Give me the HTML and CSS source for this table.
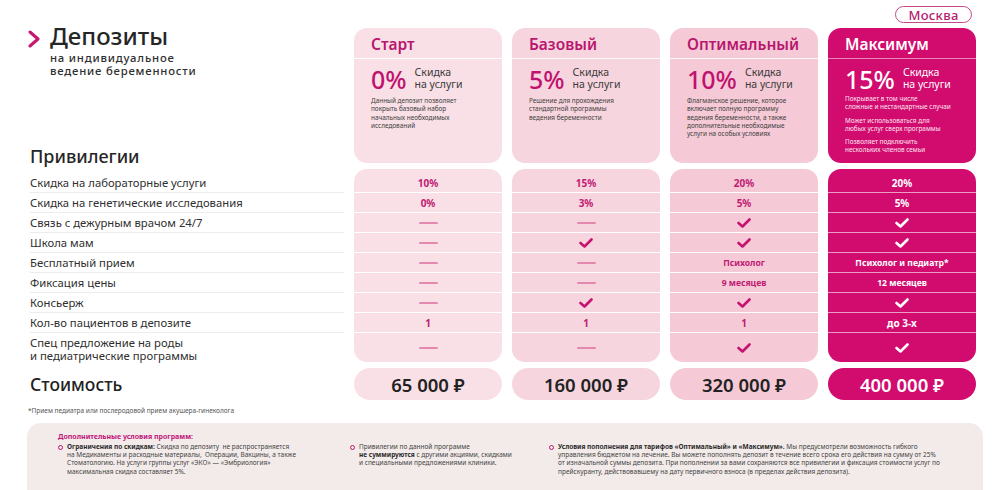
FILE: index.html
```html
<!DOCTYPE html>
<html lang="ru">
<head>
<meta charset="utf-8">
<title>Депозиты</title>
<link rel="stylesheet" href="styles.css">
</head>
<body>
<div class="page">
  <div class="city-row"><span class="city">Москва</span></div>

  <div class="grid top">
    <div class="intro">
      <div class="head">
        <svg class="chev" width="12" height="18" viewBox="0 0 12 18"><path d="M2 2 L10 9 L2 16" fill="none" stroke="#c8156f" stroke-width="3" stroke-linecap="round" stroke-linejoin="round"/></svg>
        <div>
          <h1 class="title">Депозиты</h1>
          <p class="subtitle">на индивидуальное<br>ведение беременности</p>
        </div>
      </div>
      <h2 class="section">Привилегии</h2>
    </div>

    <div class="plan c1">
      <div class="plan-name">Старт</div>
      <div class="plan-body">
        <div class="disc"><span class="pct">0%</span><span class="disc-l">Скидка<br>на услуги</span></div>
        <p class="desc">Данный депозит позволяет<br>покрыть базовый набор<br>начальных необходимых<br>исследований</p>
      </div>
    </div>
    <div class="plan c2">
      <div class="plan-name">Базовый</div>
      <div class="plan-body">
        <div class="disc"><span class="pct">5%</span><span class="disc-l">Скидка<br>на услуги</span></div>
        <p class="desc">Решение для прохождения<br>стандартной программы<br>ведения беременности</p>
      </div>
    </div>
    <div class="plan c3">
      <div class="plan-name">Оптимальный</div>
      <div class="plan-body">
        <div class="disc"><span class="pct">10%</span><span class="disc-l">Скидка<br>на услуги</span></div>
        <p class="desc">Флагманское решение, которое<br>включает полную программу<br>ведения беременности, а также<br>дополнительные необходимые<br>услуги на особых условиях</p>
      </div>
    </div>
    <div class="plan c4">
      <div class="plan-name">Максимум</div>
      <div class="plan-body">
        <div class="disc"><span class="pct">15%</span><span class="disc-l">Скидка<br>на услуги</span></div>
        <p class="desc">Покрывает в том числе<br>сложные и нестандартные случаи</p>
        <p class="desc">Может использоваться для<br>любых услуг сверх программы</p>
        <p class="desc">Позволяет подключить<br>нескольких членов семьи</p>
      </div>
    </div>
  </div>

  <div class="grid table">
    <div class="labels">
      <div class="lrow">Скидка на лабораторные услуги</div>
      <div class="lrow">Скидка на генетические исследования</div>
      <div class="lrow">Связь с дежурным врачом 24/7</div>
      <div class="lrow">Школа мам</div>
      <div class="lrow">Бесплатный прием</div>
      <div class="lrow">Фиксация цены</div>
      <div class="lrow">Консьерж</div>
      <div class="lrow">Кол-во пациентов в депозите</div>
      <div class="lrow tall">Спец предложение на роды<br>и педиатрические программы</div>
    </div>

    <div class="col c1">
      <div class="cell">10%</div>
      <div class="cell">0%</div>
      <div class="cell"><span class="dash"></span></div>
      <div class="cell"><span class="dash"></span></div>
      <div class="cell"><span class="dash"></span></div>
      <div class="cell"><span class="dash"></span></div>
      <div class="cell"><span class="dash"></span></div>
      <div class="cell">1</div>
      <div class="cell tall"><span class="dash"></span></div>
    </div>
    <div class="col c2">
      <div class="cell">15%</div>
      <div class="cell">3%</div>
      <div class="cell"><span class="dash"></span></div>
      <div class="cell"><svg class="chk" viewBox="0 0 14 10"><path d="M1.5 5 L5.5 8.5 L12.5 1.5"/></svg></div>
      <div class="cell"><span class="dash"></span></div>
      <div class="cell"><span class="dash"></span></div>
      <div class="cell"><svg class="chk" viewBox="0 0 14 10"><path d="M1.5 5 L5.5 8.5 L12.5 1.5"/></svg></div>
      <div class="cell">1</div>
      <div class="cell tall"><span class="dash"></span></div>
    </div>
    <div class="col c3">
      <div class="cell">20%</div>
      <div class="cell">5%</div>
      <div class="cell"><svg class="chk" viewBox="0 0 14 10"><path d="M1.5 5 L5.5 8.5 L12.5 1.5"/></svg></div>
      <div class="cell"><svg class="chk" viewBox="0 0 14 10"><path d="M1.5 5 L5.5 8.5 L12.5 1.5"/></svg></div>
      <div class="cell small">Психолог</div>
      <div class="cell small">9 месяцев</div>
      <div class="cell"><svg class="chk" viewBox="0 0 14 10"><path d="M1.5 5 L5.5 8.5 L12.5 1.5"/></svg></div>
      <div class="cell">1</div>
      <div class="cell tall"><svg class="chk" viewBox="0 0 14 10"><path d="M1.5 5 L5.5 8.5 L12.5 1.5"/></svg></div>
    </div>
    <div class="col c4">
      <div class="cell">20%</div>
      <div class="cell">5%</div>
      <div class="cell"><svg class="chk" viewBox="0 0 14 10"><path d="M1.5 5 L5.5 8.5 L12.5 1.5"/></svg></div>
      <div class="cell"><svg class="chk" viewBox="0 0 14 10"><path d="M1.5 5 L5.5 8.5 L12.5 1.5"/></svg></div>
      <div class="cell small">Психолог и педиатр*</div>
      <div class="cell small">12 месяцев</div>
      <div class="cell"><svg class="chk" viewBox="0 0 14 10"><path d="M1.5 5 L5.5 8.5 L12.5 1.5"/></svg></div>
      <div class="cell">до 3-х</div>
      <div class="cell tall"><svg class="chk" viewBox="0 0 14 10"><path d="M1.5 5 L5.5 8.5 L12.5 1.5"/></svg></div>
    </div>
  </div>

  <div class="grid prices">
    <div class="price-label">Стоимость</div>
    <div class="price c1">65 000 ₽</div>
    <div class="price c2">160 000 ₽</div>
    <div class="price c3">320 000 ₽</div>
    <div class="price c4">400 000 ₽</div>
  </div>

  <p class="footnote">*Прием педиатра или послеродовой прием акушера-гинеколога</p>

  <div class="conditions">
    <div class="cond-title">Дополнительные условия программ:</div>
    <div class="cond-grid">
      <div class="item"><span class="bul"></span><p><b>Ограничения по скидкам:</b> Скидка по депозиту&nbsp; не распространяется<br>на Медикаменты и расходные материалы,&nbsp; Операции, Вакцины, а также<br>Стоматологию. На услуги группы услуг «ЭКО» — «Эмбриология»<br>максимальная скидка составляет 5%.</p></div>
      <div class="item"><span class="bul"></span><p>Привилегии по данной программе<br><b>не суммируются</b> с другими акциями, скидками<br>и специальными предложениями клиники.</p></div>
      <div class="item"><span class="bul"></span><p><b>Условия пополнения для тарифов «Оптимальный» и «Максимум».</b> Мы предусмотрели возможность гибкого<br>управления бюджетом на лечение. Вы можете пополнять депозит в течение всего срока его действия на сумму от 25%<br>от изначальной суммы депозита. При пополнении за вами сохраняются все привилегии и фиксация стоимости услуг по<br>прейскуранту, действовавшему на дату первичного взноса (в пределах действия депозита).</p></div>
    </div>
  </div>
</div>
</body>
</html>
```

FILE: styles.css
```css
* { box-sizing: border-box; }
body {
  margin: 0;
  background: #fff;
  font-family: "Noto Sans", "DejaVu Sans", sans-serif;
  color: #2b2b2b;
}
p, h1, h2 { margin: 0; }

.page {
  width: 1000px;
  height: 490px;
  overflow: hidden;
  padding: 6px 0 0 30px;
}

.city-row {
  width: 942px;
  display: flex;
  justify-content: flex-end;
}
.city {
  width: 77px;
  height: 17px;
  border: 1.3px solid #c5488a;
  border-radius: 9px;
  display: flex;
  align-items: center;
  justify-content: center;
  font-size: 13px;
  font-weight: 500;
  letter-spacing: 0.3px;
  color: #b51c70;
}

.grid {
  display: grid;
  grid-template-columns: 314px repeat(4, 148px);
  column-gap: 10px;
}

/* top section */
.top { margin-top: 5px; height: 135px; }
.intro {
  display: flex;
  flex-direction: column;
  justify-content: space-between;
}
.head {
  display: flex;
  align-items: flex-start;
  margin-top: -6px;
  margin-left: -2px;
}
.chev { margin-top: 8px; margin-right: 10px; flex: none; }
.title {
  font-size: 24px;
  line-height: 28px;
  font-weight: 500;
  color: #262626;
}
.subtitle {
  margin-top: 1px;
  font-size: 11.3px;
  line-height: 13px;
  letter-spacing: 0.8px;
  font-weight: 500;
  color: #2f2f2f;
}
.section {
  font-size: 18px;
  line-height: 20px;
  font-weight: 500;
  color: #262626;
  margin-bottom: -3px;
}

.plan { border-radius: 13px; }
.c1 { background: #f9e0e6; }
.c2 { background: #f7d5de; }
.c3 { background: #f5cad6; }
.c4 { background: #d20b6f; color: #fff; }

.plan-name {
  height: 31px;
  border-bottom: 1px solid rgba(255,255,255,0.85);
  padding: 6px 0 0 17px;
  font-size: 15.5px;
  line-height: 20px;
  font-weight: 600;
  color: #b8166f;
}
.c4 .plan-name { color: #fff; border-bottom-color: rgba(255,255,255,0.5); }
.plan-body { padding: 8px 6px 0 17px; }
.disc { display: flex; align-items: center; height: 24px; }
.pct {
  font-size: 25px;
  line-height: 24px;
  font-weight: 500;
  color: #c0126f;
  margin-right: 8px;
}
.c4 .pct { color: #fff; }
.disc-l {
  font-size: 10.5px;
  line-height: 12px;
  color: #3a3a3a;
  margin-top: -2px;
}
.c4 .disc-l { color: #fff; }
.desc {
  margin-top: 6px;
  font-size: 6.4px;
  line-height: 8.3px;
  color: #3d3d3d;
}
.c4 .desc { color: #fde6f0; margin-top: 5px; }
.c4 .disc + .desc { margin-top: 4px; }

/* table */
.table { margin-top: 6px; }
.labels { padding-top: 4px; }
.lrow {
  height: 20px;
  border-bottom: 1px solid #ececec;
  display: flex;
  align-items: center;
  font-size: 11.3px;
  color: #2f2f2f;
}
.lrow.tall {
  height: 29px;
  border-bottom: none;
  line-height: 13px;
  padding-top: 2px;
}
.col { border-radius: 13px; padding-top: 4px; }
.cell {
  height: 20px;
  border-bottom: 1px solid #fff;
  display: flex;
  align-items: center;
  justify-content: center;
  font-size: 10px;
  font-weight: 700;
  color: #bf1a74;
}
.cell.small { font-size: 8.6px; }
.cell.tall { height: 29px; border-bottom: none; }
.c4 .cell { color: #fff; border-bottom-color: rgba(255,255,255,0.6); }
.c4 .cell.tall { border-bottom: none; }
.dash {
  width: 19px;
  height: 2px;
  background: #e488af;
  border-radius: 1px;
}
.chk {
  width: 14px;
  height: 10px;
  fill: none;
  stroke: #c5136f;
  stroke-width: 2.6;
  stroke-linecap: round;
  stroke-linejoin: round;
}
.c4 .chk { stroke: #fff; }

/* prices */
.prices { margin-top: 6px; height: 32px; }
.price-label {
  display: flex;
  align-items: center;
  font-size: 17.5px;
  font-weight: 500;
  color: #222;
}
.price {
  border-radius: 16px;
  display: flex;
  align-items: center;
  justify-content: center;
  font-size: 18.5px;
  font-weight: 600;
  color: #222;
}
.price.c4 { color: #fff; }

.footnote {
  margin: 6px 0 0 -2px;
  font-size: 6.5px;
  line-height: 9px;
  color: #555;
}

/* conditions */
.conditions {
  margin: 8px 0 0 -3px;
  width: 956px;
  height: 90px;
  background: #f3ebea;
  border-radius: 14px 14px 0 0;
  padding: 10px 0 0 31px;
}
.cond-title {
  font-size: 7px;
  line-height: 8px;
  font-weight: 700;
  color: #c0167a;
}
.cond-grid {
  margin-top: 2px;
  display: grid;
  grid-template-columns: 292px 199px 1fr;
}
.item { display: flex; align-items: flex-start; }
.item p {
  font-size: 6.5px;
  line-height: 8.2px;
  color: #444;
  white-space: nowrap;
}
.item b { color: #2a2a2a; }
.bul {
  flex: none;
  width: 5px;
  height: 5px;
  border: 1.3px solid #c5136f;
  border-radius: 50%;
  margin: 1.6px 4px 0 0;
}
```
